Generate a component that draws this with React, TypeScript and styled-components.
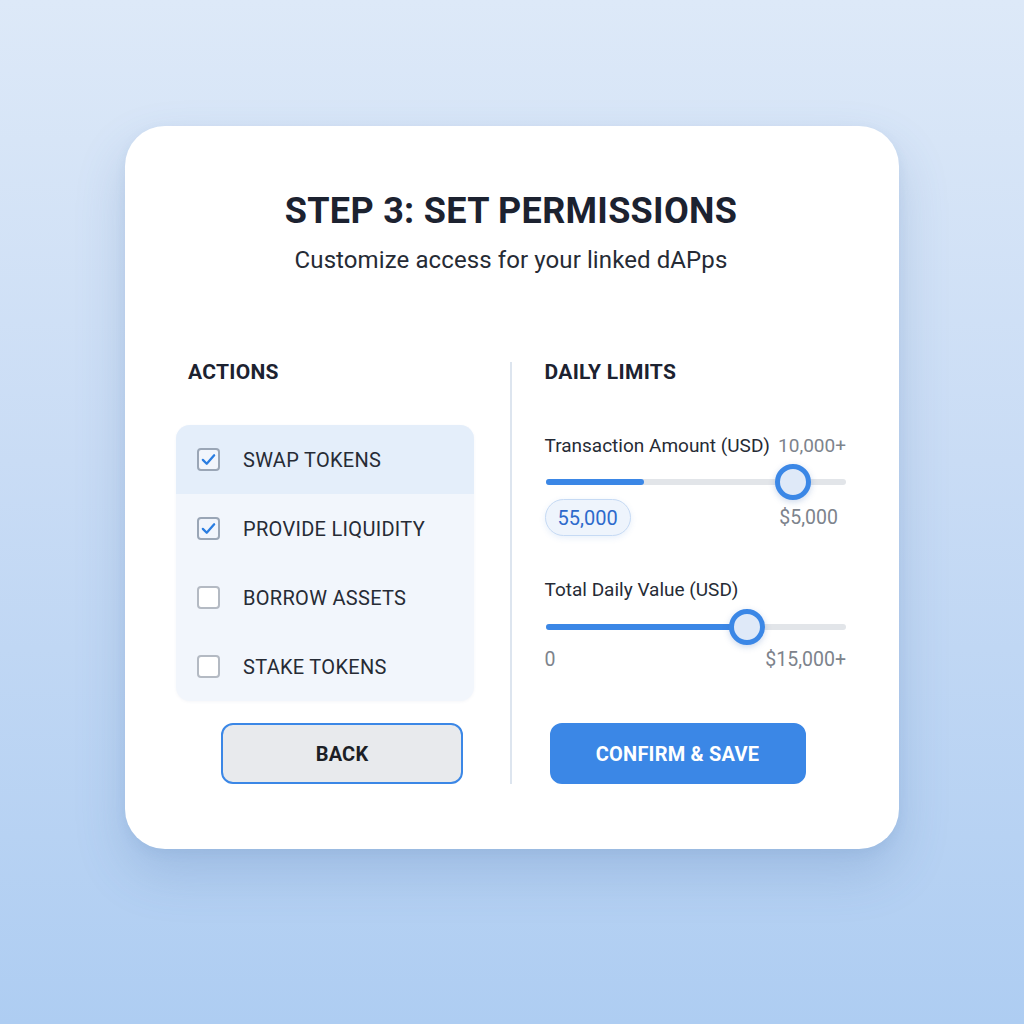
import React from 'react';
import styled, { createGlobalStyle } from 'styled-components';

// --- data ---
const ACTIONS = [
  { label: 'SWAP TOKENS', checked: true, active: true },
  { label: 'PROVIDE LIQUIDITY', checked: true, active: false },
  { label: 'BORROW ASSETS', checked: false, active: false },
  { label: 'STAKE TOKENS', checked: false, active: false },
];

const BLUE = '#3b87e6';

const GlobalStyle = createGlobalStyle`
  html, body { margin: 0; padding: 0; }
  body { font-family: Roboto, "Liberation Sans", sans-serif; }
  #root { min-height: 1024px; }
`;

const Page = styled.div`
  width: 1024px; height: 1024px; box-sizing: border-box;
  padding-top: 126px;
  display: flex; flex-direction: column; align-items: center;
  background: linear-gradient(180deg, #dde9f8 0%, #c9dcf5 45%, #aecdf2 100%);
`;

const Card = styled.div`
  width: 774px; box-sizing: border-box;
  padding: 64px 53px 65px 51px;
  background: #ffffff; border-radius: 40px;
  box-shadow: 0 24px 50px rgba(70, 110, 170, 0.22), 0 4px 12px rgba(70, 110, 170, 0.08);
  display: flex; flex-direction: column;
`;

const Header = styled.header`
  display: flex; flex-direction: column; align-items: center;
  padding-bottom: 88px;
`;

const Title = styled.h1`
  margin: 0; font-size: 36px; line-height: 42px; font-weight: 700;
  color: #1c2230; letter-spacing: 0.3px;
`;

const Subtitle = styled.p`
  margin: 14px 0 0; font-size: 24px; line-height: 28px; font-weight: 400;
  color: #262b35; letter-spacing: 0.1px;
`;

const Columns = styled.div`
  display: flex; align-items: stretch;
`;

const Column = styled.div<{ $width: number }>`
  width: ${p => p.$width}px;
  display: flex; flex-direction: column;
`;

const Divider = styled.div`
  width: 2px; background: #dde5ef; margin: 0 33px 0 36px;
`;

const SectionTitle = styled.h2<{ $indent: number }>`
  margin: 0; padding-left: ${p => p.$indent}px;
  font-size: 21px; line-height: 20px; font-weight: 700; color: #1c2230;
  letter-spacing: 0.3px;
`;

const List = styled.div`
  margin-top: 43px; border-radius: 14px; overflow: hidden;
  background: #f2f6fc;
  box-shadow: 0 1px 3px rgba(80, 110, 160, 0.06);
`;

const Row = styled.label<{ $active: boolean }>`
  height: 69px; display: flex; align-items: center; gap: 23px;
  padding-left: 21px;
  background: ${p => (p.$active ? '#e4eefa' : 'transparent')};
  font-size: 20px; color: #262b35; letter-spacing: 0.3px;
`;

const Box = styled.span<{ $checked: boolean }>`
  width: 23px; height: 23px; box-sizing: border-box;
  border: 2px solid ${p => (p.$checked ? '#9aa6b6' : '#b4bac3')};
  border-radius: 4px; background: ${p => (p.$checked ? '#f1f5fc' : '#ffffff')};
  display: flex; align-items: center; justify-content: center;
`;

const Button = styled.button<{ $primary?: boolean; $offset: number; $width: number }>`
  margin-top: auto; margin-left: ${p => p.$offset}px;
  width: ${p => p.$width}px; height: 61px; border-radius: 12px;
  font-family: Roboto, "Liberation Sans", sans-serif;
  font-size: 20px; font-weight: 700; letter-spacing: 0.2px;
  background: ${p => (p.$primary ? BLUE : '#e8eaed')};
  color: ${p => (p.$primary ? '#ffffff' : '#1c1f26')};
  border: 2px solid ${BLUE};
  cursor: pointer;
`;

const FieldLabel = styled.div<{ $gap: number }>`
  margin-top: ${p => p.$gap}px;
  display: flex; justify-content: space-between; align-items: center;
  font-size: 19px; line-height: 22px; color: #262b35;
`;

const Muted = styled.span`
  color: #7d838c;
`;

const Track = styled.div<{ $gap: number }>`
  position: relative; margin-top: ${p => p.$gap}px; height: 36px;
  &::before {
    content: ''; position: absolute; left: 1px; right: 0; top: 15px;
    height: 6px; border-radius: 3px; background: #e2e5e9;
  }
`;

const Fill = styled.div`
  position: absolute; left: 1px; top: 15px; height: 6px; border-radius: 3px;
  background: ${BLUE};
`;

const Thumb = styled.div`
  position: absolute; top: 0; width: 36px; height: 36px; box-sizing: border-box;
  margin-left: -18px; border-radius: 50%;
  border: 5px solid ${BLUE}; background: #dfe9f8;
  box-shadow: 0 2px 6px rgba(50, 100, 180, 0.25);
`;

const ValueRow = styled.div<{ $gap: number }>`
  margin-top: ${p => p.$gap}px;
  display: flex; justify-content: space-between; align-items: center;
  font-size: 19.5px; line-height: 22px; color: #7d838c;
`;

const Pill = styled.span`
  height: 37px; box-sizing: border-box; padding: 0 12px;
  display: flex; align-items: center;
  border-radius: 19px; border: 1px solid #c6daf4; background: #eef4fc;
  color: #2d6acc; font-size: 20px;
  box-shadow: 0 2px 6px rgba(60, 120, 210, 0.12);
`;

const Check = () => (
  <svg width="17" height="17" viewBox="0 0 24 24" fill="none" stroke="#2a7de1" strokeWidth="3.2" strokeLinecap="round" strokeLinejoin="round">
    <polyline points="4 12.5 9.5 18 20 6" />
  </svg>
);

const Slider = ({ fill, thumb, gap }: { fill: number; thumb: number; gap: number }) => (
  <Track $gap={gap}>
    <Fill style={{ width: `${fill}%` }} />
    <Thumb style={{ left: `${thumb}%` }} />
  </Track>
);

export default function App() {
  return (
    <>
      <GlobalStyle />
      <Page>
        <Card>
          <Header>
            <Title>STEP 3: SET PERMISSIONS</Title>
            <Subtitle>Customize access for your linked dAPps</Subtitle>
          </Header>

          <Columns>
            <Column $width={298}>
              <SectionTitle $indent={12}>ACTIONS</SectionTitle>
              <List>
                {ACTIONS.map(a => (
                  <Row key={a.label} $active={a.active}>
                    <Box $checked={a.checked}>{a.checked && <Check />}</Box>
                    {a.label}
                  </Row>
                ))}
              </List>
              <Button $offset={45} $width={242} style={{ marginTop: 22 }}>BACK</Button>
            </Column>

            <Divider />

            <Column $width={302}>
              <SectionTitle $indent={0}>DAILY LIMITS</SectionTitle>

              <FieldLabel $gap={53}>
                <span>Transaction Amount (USD)</span>
                <Muted>10,000+</Muted>
              </FieldLabel>
              <Slider fill={32.7} thumb={82.5} gap={7} />
              <ValueRow $gap={-1} style={{ paddingRight: 8 }}>
                <Pill>55,000</Pill>
                <span>$5,000</span>
              </ValueRow>

              <FieldLabel $gap={43}>
                <span>Total Daily Value (USD)</span>
              </FieldLabel>
              <Slider fill={67} thumb={67.3} gap={8} />
              <ValueRow $gap={4}>
                <span>0</span>
                <span>$15,000+</span>
              </ValueRow>

              <Button $primary $offset={5} $width={256}>CONFIRM &amp; SAVE</Button>
            </Column>
          </Columns>
        </Card>
      </Page>
    </>
  );
}
